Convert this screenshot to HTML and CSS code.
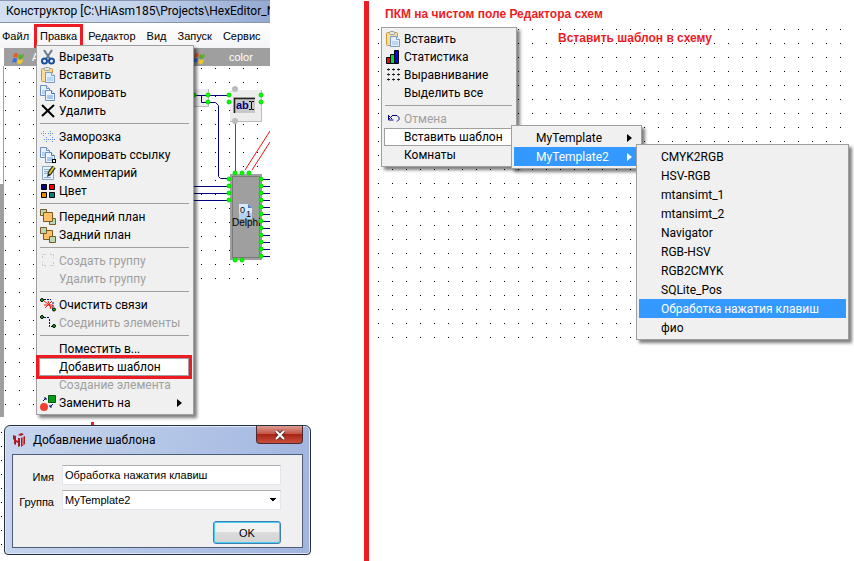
FILE: index.html
```html
<!DOCTYPE html>
<html lang="ru">
<head>
<meta charset="utf-8">
<title>Конструктор</title>
<link rel="stylesheet" href="styles.css">
</head>
<body>
<svg class="defs" aria-hidden="true">
  <defs>
    <symbol id="paste" viewBox="0 0 16 16">
      <rect x="1.5" y="1.5" width="11" height="13" rx="1" fill="#f8dc98" stroke="#c99a3a"/>
      <rect x="4.500" y=".5" width="5" height="3" rx="1" fill="#e4e8ee" stroke="#98a0aa"/>
      <path d="M5.500 5.500h6l3 3v7h-9z" fill="#e2efff" stroke="#7d9cc4"/>
      <path d="M11.500 5.500v3h3" fill="#fff" stroke="#7d9cc4"/>
      <path d="M7 10h6v4H7z" fill="#bcd6f6"/>
    </symbol>
    <symbol id="copy" viewBox="0 0 16 16">
      <path d="M.5.5h6l3 3v7h-9z" fill="#e4f0ff" stroke="#6d8fbd"/>
      <path d="M2 5h5v4H2z" fill="#b5d0f2"/>
      <path d="M6.500.5v3h3M5.500 5.500h6l3 3v7h-9z" fill="#eef6ff" stroke="#6d8fbd"/>
      <path d="M11.500 5.500v3h3" fill="#fff" stroke="#466fa8"/>
      <path d="M7 10h6v4H7z" fill="#a9c8f0"/>
    </symbol>
    <symbol id="winflag" viewBox="0 0 12 12">
      <path d="M2 2q2-2 4 0L5 6Q3 4 1 6z" fill="#e85a20"/>
      <path d="M7 2q2 2 5 0l-1 4q-3 2-5 0z" fill="#5dac2c"/>
      <path d="M1 7q2-2 4 0l-1 4q-2-2-4 0z" fill="#3c6ee0"/>
      <path d="M6 7q2 2 5 0l-1 4q-3 2-5 0z" fill="#f2c81e"/>
    </symbol>
  </defs>
</svg>
<main class="page">
  <section class="left">
    <div class="editor">
      <header class="titlebar">Конструктор [C:\HiAsm185\Projects\HexEditor_N</header>
      <nav class="menubar">
        <button>Файл</button><button class="current">Правка</button><button>Редактор</button><button>Вид</button><button>Запуск</button><button>Сервис</button>
      </nav>
      <div class="tabs">
        <span class="tab"><svg><use href="#winflag"/></svg>A</span>
        <span class="tab"><svg><use href="#winflag"/></svg>color</span>
      </div>
      <div class="canvas">
        <div class="rail"></div>
        <svg class="scheme" width="77" height="200" viewBox="193 80 77 200">
          <path d="M193 89h15v17h-15z" fill="#ededed"/><path d="M208.500 89v17.500H193" fill="none" stroke="#bbb"/>
          <g fill="none" stroke="#000080"><path d="M193 95.500h36M201.500 96v6.500h14l3 3v71l2 2h10M193 186.500h37M193 193.500h37M193 200.500h37"/>
          <path d="M261 179.500h9M261 186.500h9M261 193.500h9M261 200.500h9M261 207.500h9M261 214.500h9M261 221.500h9M261 228.500h9M261 235.500h9M261 242.500h9M261 249.500h9M261 256.500h9"/></g>
          <path d="M235.500 122v51M245 170l25-39M252 170l18-28" fill="none" stroke="#f01010"/>
          <path d="M230 90h31v31h-31z" fill="#ececec"/><path d="M261.500 90v31.500H230" fill="none" stroke="#bbb"/>
          <path d="M233 97h22v16h-22z" fill="#c8c8c8"/><path d="M234.500 113V98.500H255" fill="none" stroke="#222" stroke-width="1.500"/>
          <text x="236" y="109" class="ab">ab</text><path d="M249 101.500h2l.5.5.5-.5h2M251.500 102v7M249 109.500h2l.5-.5.5.5h2" fill="none" stroke="#000"/>
          <path d="M230 174h32v86h-32z" fill="#9f9f9f"/><rect x="232.500" y="176.500" width="27" height="81" fill="none" stroke="#555" stroke-dasharray="1 1"/>
          <path d="M239 204h9l4 4v11h-13z" fill="#d6e9ff"/><path d="M248 204v4h4z" fill="#4a80c8"/><path d="M239 213h13v6h-13z" fill="#b2d2f5"/>
          <text x="240" y="213" class="bits">0</text><text x="246" y="217" class="bits">1</text>
          <text x="232" y="226" class="node-name">Delphi</text>
          <g class="gray-pin"><circle cx="235" cy="89" r="3"/><circle cx="235" cy="121" r="3"/></g>
          <g class="pin"><circle cx="194" cy="95" r="2"/><circle cx="208" cy="95" r="2"/><circle cx="208" cy="102" r="2"/><circle cx="229" cy="95" r="2"/><circle cx="229" cy="102" r="2"/><circle cx="261" cy="95" r="2"/><circle cx="261" cy="102" r="2"/>
          <circle cx="235" cy="173" r="2"/><circle cx="242" cy="173" r="2"/><circle cx="249" cy="173" r="2"/><circle cx="235" cy="260" r="2"/><circle cx="242" cy="260" r="2"/>
          <circle cx="229" cy="179" r="2"/><circle cx="229" cy="186" r="2"/><circle cx="229" cy="193" r="2"/><circle cx="229" cy="200" r="2"/>
          <circle cx="261" cy="179" r="2"/><circle cx="261" cy="186" r="2"/><circle cx="261" cy="193" r="2"/><circle cx="261" cy="200" r="2"/><circle cx="261" cy="207" r="2"/><circle cx="261" cy="214" r="2"/><circle cx="261" cy="221" r="2"/><circle cx="261" cy="228" r="2"/><circle cx="261" cy="235" r="2"/><circle cx="261" cy="242" r="2"/><circle cx="261" cy="249" r="2"/><circle cx="261" cy="256" r="2"/></g>
        </svg>
      </div>
    </div>
    <div class="edge"></div>
    <div class="tick"></div>

    <div class="menu edit-menu">
      <button><svg viewBox="0 0 16 16"><path d="M4 1l6 9M12 1L6 10" stroke="#68798c" stroke-width="2"/><circle cx="4.500" cy="12" r="2.500" fill="none" stroke="#1c4f9c" stroke-width="2"/><circle cx="11.500" cy="12" r="2.500" fill="none" stroke="#1c4f9c" stroke-width="2"/></svg>Вырезать</button>
      <button><svg><use href="#paste"/></svg>Вставить</button>
      <button><svg><use href="#copy"/></svg>Копировать</button>
      <button><svg viewBox="0 0 16 16"><path d="M2 2l12 12M14 2L2 13" fill="none" stroke="#000" stroke-width="2"/></svg>Удалить</button>
      <hr>
      <button><svg viewBox="0 0 16 16"><path d="M3.500 2v5M1 4.500h5M10.500 2v5M8 4.500h5M6.500 8v5M4 10.500h5M12.500 8v5M10 10.500h5" stroke="#6a94ec" stroke-dasharray="1 1"/></svg>Заморозка</button>
      <button><svg viewBox="0 0 16 16"><use href="#copy"/><rect x="12.500" y="12.500" width="3" height="3" fill="#fff" stroke="#000"/></svg>Копировать ссылку</button>
      <button><svg viewBox="0 0 16 16"><path d="M2.500 1.500h11v13h-11z" fill="#eaf4ff" stroke="#8aa6c8"/><path d="M4 4.500h6M4 6.500h5M4 8.500h4M4 12.500h7" stroke="#8baad0"/><path d="M14 2L9 9" stroke="#222" stroke-width="4"/><path d="M14 2L9 9" stroke="#d8d020" stroke-width="2"/><path d="M7 12l1-4 3 2z" fill="#222"/></svg>Комментарий</button>
      <button><svg viewBox="0 0 16 16" stroke="#000"><path d="M1.500 1.500h5v5h-5z" fill="#000080"/><path d="M9.500 1.500h5v5h-5z" fill="#f00"/><path d="M1.500 9.500h5v5h-5z" fill="#e09000"/><path d="M9.500 9.500h5v5h-5z" fill="#008080"/></svg>Цвет</button>
      <hr>
      <button><svg viewBox="0 0 16 16" stroke="#7c5a24"><path d="M.5.5h6v6h-6zM9.500 9.500h6v6h-6z" fill="#b8d8b8"/><path d="M3.500 3.500h9v9h-9z" fill="#ffc266"/></svg>Передний план</button>
      <button><svg viewBox="0 0 16 16" stroke="#7c5a24"><path d="M3.500 3.500h9v9h-9z" fill="#ffc266"/><path d="M.5.5h6v6h-6zM9.500 9.500h6v6h-6z" fill="#b8d8b8"/></svg>Задний план</button>
      <hr>
      <button disabled><svg viewBox="0 0 16 16"><path d="M2.500 5V1.500H6M10 1.500h3.500V5M13.500 9v3.500H10M6 12.500H2.500V9" fill="none" stroke="#b9d0b9" stroke-dasharray="2 1"/></svg>Создать группу</button>
      <button disabled><svg></svg>Удалить группу</button>
      <hr>
      <button><svg viewBox="0 0 16 16"><path d="M4 2.500h7M13 5v8" stroke="#000080" stroke-dasharray="2 1"/><path d="M4 4l9 7M4 8h9M5 11l7-7M8 4l3 8" stroke="#e82010"/><circle cx="2" cy="3" r="1.500" fill="#0c0" stroke="#000"/><circle cx="14" cy="12.500" r="1.500" fill="#0c0" stroke="#000"/></svg>Очистить связи</button>
      <button disabled><svg viewBox="0 0 16 16"><path d="M4 2.500h6M9.500 4v7.500h4" fill="none" stroke="#000080" stroke-dasharray="2 1"/><circle cx="2" cy="2" r="1.500" fill="#0c0" stroke="#000"/><circle cx="14" cy="11" r="1.500" fill="#0c0" stroke="#000"/></svg>Соединить элементы</button>
      <hr>
      <button><svg></svg>Поместить в...</button>
      <button class="hover marked"><svg></svg>Добавить шаблон</button>
      <button disabled><svg></svg>Создание элемента</button>
      <button><svg viewBox="0 0 16 16"><path d="M8.500.5h7v7h-7z" fill="#0a9a1a" stroke="#045c0c"/><circle cx="4" cy="12" r="4" fill="#f04030"/><path d="M3 6l3-3M4 3h2v2M10 12l3-3M10 10v2h2" fill="none" stroke="#000080"/></svg>Заменить на<i class="arrow"></i></button>
    </div>

    <form class="dialog">
      <header class="dialog-title">
        <svg viewBox="0 0 14 14"><path d="M1 2l3 1v4l2 1V5h2v8l-2 1v-4l-2-1v3l-2-1V7L1 6zM9 5l4-2v8l-4 3z" fill="#a81c24"/><path d="M6 2l3-2 3 1-3 2z" fill="#a81c24"/><path d="M11 4v8" stroke="#e8b0b4"/></svg>
        <span>Добавление шаблона</span>
        <button type="button" class="close" aria-label="Закрыть"><svg viewBox="0 0 12 10"><path d="M2 1l8 8M10 1L2 9" stroke="#5b3230" stroke-width="4"/><path d="M2 1l8 8M10 1L2 9" stroke="#fff" stroke-width="2"/></svg></button>
      </header>
      <div class="dialog-body">
        <label for="name">Имя</label><input id="name" value="Обработка нажатия клавиш">
        <label for="group">Группа</label><select id="group"><option>MyTemplate2</option></select>
        <button type="button" class="ok">OK</button>
      </div>
    </form>
  </section>
  <div class="divider"></div>
  <section class="right">
    <h1>ПКМ на чистом поле Редактора схем</h1>
    <div class="field"><p>Вставить шаблон в схему</p></div>
    <div class="menu context-menu">
      <button><svg><use href="#paste"/></svg>Вставить</button>
      <button><svg viewBox="0 0 16 16" stroke="#000"><path d="M1.500 8.500h4v6h-4z" fill="#f00"/><path d="M5.500 5.500h4v9h-4z" fill="#0d3"/><path d="M9.500 1.500h4v13h-4z" fill="#00f"/></svg>Статистика</button>
      <button><svg viewBox="0 0 16 16"><path d="M2 2.500h12M2 7.500h12M2 12.500h12" stroke="#777" stroke-width="3" stroke-dasharray="1 4" stroke-dashoffset="-1"/><path d="M2 2.500h13M2 7.500h13M2 12.500h13" stroke="#222" stroke-dasharray="3 2"/></svg>Выравнивание</button>
      <button><svg></svg>Выделить все</button>
      <hr>
      <button disabled><svg viewBox="0 0 16 16"><path d="M3.500 4v5h5M4 8l4-4M7 8L4 5M8 4.500h4l2 2v2l-2 2" fill="none" stroke="#000080"/></svg>Отмена</button>
      <button class="hover"><svg></svg>Вставить шаблон</button>
      <button><svg></svg>Комнаты</button>
    </div>
    <div class="menu submenu">
      <button>MyTemplate<i class="arrow"></i></button>
      <button class="selected">MyTemplate2<i class="arrow"></i></button>
    </div>
    <div class="menu submenu templates">
      <button>CMYK2RGB</button>
      <button>HSV-RGB</button>
      <button>mtansimt_1</button>
      <button>mtansimt_2</button>
      <button>Navigator</button>
      <button>RGB-HSV</button>
      <button>RGB2CMYK</button>
      <button>SQLite_Pos</button>
      <button class="selected">Обработка нажатия клавиш</button>
      <button>фио</button>
    </div>
  </section>
</main>
</body>
</html>
```
FILE: styles.css
```css
* { box-sizing: border-box; }
body { margin: 0; background: #fff; color: #000; font: 11px "Liberation Sans", sans-serif; }
button { margin: 0; padding: 0; border: 0; background: none; color: inherit; font: inherit; text-align: left; }
.defs { position: absolute; width: 0; height: 0; }
.page { display: grid; grid-template-columns: 364px 5px 1fr; min-height: 100vh; }
.left, .right { position: relative; }
.divider { margin-top: 1px; background: #ed1c24; }

.editor { width: 270px; overflow: hidden; }
.titlebar { height: 22px; padding-left: 6px; border-top: 1px solid #8896b4; background: linear-gradient(90deg, #d3e0f1, #c4d4eb 50%, #93a9d2); font: 12px/20px Roboto, sans-serif; white-space: nowrap; }
.menubar { display: flex; gap: 11px; height: 26px; padding-left: 2px; border-top: 1px solid #8a94a8; background: linear-gradient(#fff, #f4f4f6); line-height: 26px; white-space: nowrap; }
.menubar .current { height: 12px; margin-top: 7px; outline: 3px solid #ed1c24; outline-offset: 3px; line-height: 12px; }
.tabs { display: flex; height: 18px; margin-left: 4px; background: #9f9f9f; color: #fff; line-height: 19px; }
.tab { display: flex; flex: 0 0 181px; gap: 8px; padding-left: 8px; }
.tab + .tab { gap: 24px; }
.tab svg { width: 12px; height: 12px; margin-top: 4px; }
.canvas { position: relative; height: 351px; }
.canvas::before { content: ""; position: absolute; inset: 0 0 0 4px; background: conic-gradient(at 1px 1px, transparent 270deg, #000 0) 1px 2px / 14px 14px; }
.canvas::after { content: ""; position: absolute; inset: 213px 0 0 190px; background: #fff; }
.rail { position: absolute; left: 0; top: 0; width: 4px; height: 351px; border-right: 1px solid #9f9f9f; background: linear-gradient(#fff 118px, #9f9f9f 0); }
.scheme { position: absolute; left: 193px; top: 14px; }
.pin { fill: #0f0; stroke: #0d0; }
.gray-pin { fill: #bbb; }
.ab { font: bold 11px "Liberation Sans", sans-serif; fill: #000080; }
.bits { font: 9px "Liberation Sans", sans-serif; }
.node-name { font: 10px "Liberation Sans", sans-serif; }
.edge { position: absolute; left: 1px; top: 432px; width: 1px; height: 113px; background: repeating-linear-gradient(#000 0 1px, transparent 1px 14px); }
.tick { position: absolute; left: 91px; top: 422px; width: 3px; height: 3px; background: #ed1c24; }

.menu { position: absolute; padding: 2px 4px 2px 2px; border: 1px solid #9f9f9f; background: #f0f0f0; box-shadow: 3px 3px 3px rgba(0, 0, 0, .5); font: 12px Roboto, sans-serif; }
.menu button { display: flex; align-items: center; gap: 3px; width: 100%; height: 18px; padding-left: 1px; white-space: nowrap; }
.menu svg { flex: none; width: 16px; height: 16px; }
.menu button:disabled { color: #9f9f9f; }
.menu hr { height: 2px; margin: 3px 0 3px 1px; border: 0; border-top: 1px solid #a0a0a0; }
.menu .hover { background: #fff; box-shadow: inset 0 0 0 1px #9f9f9f; }
.menu .marked { outline: 3px solid #ed1c24; }
.menu .selected { background: #3399ff; color: #fff; }
.arrow { margin: 0 7px 0 auto; border: 4px solid transparent; border-left: 5px solid; border-right: 0; }
.edit-menu { left: 36px; top: 45px; width: 158px; }
.context-menu { left: 12px; top: 27px; width: 136px; }
.submenu { left: 142px; top: 125px; width: 131px; padding: 2px; }
.submenu button { height: 19px; padding-left: 22px; }
.templates { left: 267px; top: 144px; width: 213px; }

.dialog { position: absolute; left: 4px; top: 425px; width: 307px; padding: 0 7px 6px; border: 1px solid #26303e; border-radius: 6px 6px 4px 4px; background: linear-gradient(100deg, #c8d7ee, #b4c6e7 50%, #a0b4de); box-shadow: inset 0 0 0 1px #dce6f5; }
.dialog-title { display: flex; align-items: center; gap: 7px; height: 28px; font: 12px Roboto, sans-serif; }
.dialog-title svg { width: 14px; height: 14px; }
.close { display: grid; place-items: center; align-self: flex-start; width: 47px; height: 18px; margin-left: auto; border: 1px solid #4b2a30; border-top: 0; border-radius: 0 0 4px 4px; background: linear-gradient(#dc9a90, #c4574a 45%, #a82414 50%, #c8503c); }
.dialog-title .close svg { width: 12px; height: 10px; }
.dialog-body { display: grid; grid-template-columns: 36px 219px; column-gap: 8px; row-gap: 5px; padding: 10px 0 3px 5px; border: 1px solid #4f5d78; background: #f0f0f0; }
.dialog-body label { padding-top: 6px; text-align: right; }
.dialog-body input, .dialog-body select { width: 100%; height: 20px; margin: 0; padding: 0 2px; border: 1px solid #e2e5ec; border-top-color: #abadb3; background: #fff; color: #000; font: inherit; }
.dialog-body select { appearance: none; background: linear-gradient(to top right, transparent 50%, #000 50%) no-repeat right 7px center / 4px 4px, linear-gradient(to top left, transparent 50%, #000 50%) no-repeat right 3px center / 4px 4px, #fff; }
.ok { grid-column: 2; justify-self: end; width: 68px; height: 23px; margin-top: 6px; border: 1px solid #3c7fb1; border-radius: 3px; background: linear-gradient(#f2f2f2 50%, #dcdcdc 50%, #d2d2d2); box-shadow: inset 0 0 0 1px #48d0f8; text-align: center; }

.right { display: flex; flex-direction: column; }
h1, p { margin: 0; color: #ed1c24; font: bold 12px/16px "Liberation Sans", sans-serif; }
h1 { padding: 6px 0 6px 16px; }
.field { height: 311px; padding: 2px 0 0 189px; background: conic-gradient(at 1px 1px, transparent 270deg, #000 0) 9px 1px / 14px 14px; }
```
